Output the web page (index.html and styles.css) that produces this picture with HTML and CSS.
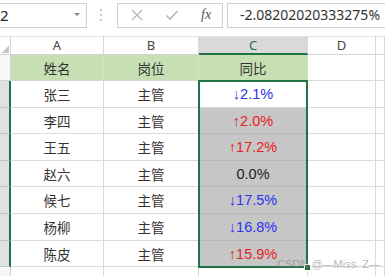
FILE: index.html
```html
<!DOCTYPE html>
<html lang="zh-CN">
  <head>
    <meta charset="UTF-8" />
    <meta name="viewport" content="width=device-width, initial-scale=1.0" />
    <link rel="stylesheet" href="styles.css">
    <title>同比</title>
  </head>
  <body>
    <div class="toolbar">
      <div class="nameBox">
        <span>2</span>
        <svg class="drop" width="6" height="4" viewBox="0 0 6 4"><path d="M0 0h6L3 3z" fill="#888"/></svg>
      </div>
      <svg class="grip" width="4" height="12" viewBox="0 0 4 12">
        <rect x="1" y="0" width="2" height="2" fill="#c8c8c8"/>
        <rect x="1" y="5" width="2" height="2" fill="#c8c8c8"/>
        <rect x="1" y="10" width="2" height="2" fill="#c8c8c8"/>
      </svg>
      <div class="fxBox">
        <svg width="14" height="14" viewBox="0 0 14 14"><path d="M2 2l10 10M12 2L2 12" stroke="#b8b8b8" stroke-width="1.3" fill="none"/></svg>
        <svg width="14" height="14" viewBox="0 0 14 14"><path d="M1.5 7.5l3.5 3.5 7.5-8" stroke="#b8b8b8" stroke-width="1.6" fill="none"/></svg>
        <span class="fx">fx</span>
      </div>
      <div class="formula">-2.08202020333275%</div>
    </div>

    <div class="sheet">
      <div class="corner"></div>
      <div class="colHead">A</div>
      <div class="colHead">B</div>
      <div class="colHead active">C</div>
      <div class="colHead">D</div>
      <div class="colHead"></div>

      <div class="rowHead"></div>
      <div class="cell title">姓名</div>
      <div class="cell title">岗位</div>
      <div class="cell title">同比</div>
      <div class="cell"></div>
      <div class="cell"></div>

      <div class="rowHead sel"></div>
      <div class="cell">张三</div>
      <div class="cell">主管</div>
      <div class="cell num down">↓2.1%</div>
      <div class="cell"></div>
      <div class="cell"></div>

      <div class="rowHead sel"></div>
      <div class="cell">李四</div>
      <div class="cell">主管</div>
      <div class="cell num picked up">↑2.0%</div>
      <div class="cell"></div>
      <div class="cell"></div>

      <div class="rowHead sel"></div>
      <div class="cell">王五</div>
      <div class="cell">主管</div>
      <div class="cell num picked up">↑17.2%</div>
      <div class="cell"></div>
      <div class="cell"></div>

      <div class="rowHead sel"></div>
      <div class="cell">赵六</div>
      <div class="cell">主管</div>
      <div class="cell num picked">0.0%</div>
      <div class="cell"></div>
      <div class="cell"></div>

      <div class="rowHead sel"></div>
      <div class="cell">候七</div>
      <div class="cell">主管</div>
      <div class="cell num picked down">↓17.5%</div>
      <div class="cell"></div>
      <div class="cell"></div>

      <div class="rowHead sel"></div>
      <div class="cell">杨柳</div>
      <div class="cell">主管</div>
      <div class="cell num picked down">↓16.8%</div>
      <div class="cell"></div>
      <div class="cell"></div>

      <div class="rowHead sel"></div>
      <div class="cell">陈皮</div>
      <div class="cell">主管</div>
      <div class="cell num picked up">↑15.9%</div>
      <div class="cell"></div>
      <div class="cell"></div>

      <div class="rowHead"></div>
      <div class="cell"></div>
      <div class="cell"></div>
      <div class="cell"></div>
      <div class="cell"></div>
      <div class="cell"></div>

      <div class="selection"><span class="handle"></span></div>
      <div class="watermark">CSDN @—Miss. Z—</div>
    </div>
  </body>
</html>
```

FILE: styles.css
```css
body {
  margin: 0;
  width: 385px;
  height: 276px;
  overflow: hidden;
  background: #fff;
  font-family: "Noto Sans CJK SC", "Noto Sans", sans-serif;
  color: #333;
}

.toolbar {
  display: flex;
  align-items: center;
  height: 29px;
  padding-top: 1px;
  box-sizing: border-box;
  margin-bottom: 7px;
}

.nameBox {
  display: flex;
  align-items: center;
  justify-content: space-between;
  width: 87px;
  height: 25px;
  box-sizing: border-box;
  border: 1px solid #d0d0d0;
  border-left: none;
  padding: 0 6px 0 0;
  font-family: "Noto Sans", sans-serif;
  font-size: 15px;
  color: #222;
}

.grip {
  margin: 0 0 0 12px;
}

.fxBox {
  display: flex;
  align-items: center;
  width: 106px;
  height: 25px;
  box-sizing: border-box;
  margin-left: 14px;
  border: 1px solid #d0d0d0;
  padding-left: 12px;
  gap: 21px;
}

.fx {
  font-family: "Liberation Serif", serif;
  font-style: italic;
  font-size: 14px;
  color: #555;
  margin-left: 1px;
}

.formula {
  flex: 1;
  height: 25px;
  box-sizing: border-box;
  margin-left: 4px;
  margin-right: -20px;
  border: 1px solid #d0d0d0;
  padding-left: 12px;
  font-family: "Noto Sans", sans-serif;
  font-size: 14px;
  line-height: 22px;
  color: #333;
}

.sheet {
  position: relative;
  display: grid;
  grid-template-columns: 11px 93px 95px 109px 68px 1fr;
  grid-template-rows: 19px 26px 27px 26px 27px 26px 27px 27px 26px 20px;
}

.sheet > div {
  box-sizing: border-box;
}

.corner {
  border-top: 1px solid #e2e2e2;
  border-right: 1px solid #d4d4d4;
  border-bottom: 1px solid #d4d4d4;
  background: linear-gradient(135deg, transparent 55%, #c8c8c8 55%) no-repeat right 1px bottom 1px / 8px 8px;
}

.colHead {
  border-top: 1px solid #e2e2e2;
  border-right: 1px solid #d8d8d8;
  border-bottom: 1px solid #d4d4d4;
  text-align: center;
  font-family: "Noto Sans", sans-serif;
  font-size: 13px;
  line-height: 16px;
  color: #444;
}

.colHead.active {
  background: #d9d9d9;
  border-bottom: 2px solid #217346;
  color: #217346;
}

.rowHead {
  border-right: 1px solid #d4d4d4;
  border-bottom: 1px solid #d4d4d4;
  background: #f7f7f7;
}

.rowHead.sel {
  background: #e1e1e1;
  border-bottom-color: #c4c4c4;
  border-right: 2px solid #217346;
}

.cell {
  display: flex;
  align-items: center;
  justify-content: center;
  border-right: 1px solid #dadada;
  border-bottom: 1px solid #dadada;
  font-size: 13.5px;
  color: #333;
}

.title {
  background: #c6e0b4;
  border-right-color: #cfe2c2;
  border-bottom-color: #d6d6d6;
}

.num {
  font-family: "Liberation Sans", "Noto Sans CJK SC", sans-serif;
  font-size: 14.5px;
}

.picked {
  background: #c6c6c6;
  border-bottom-color: #b6b6b6;
  color: #1a1a1a;
}

.up {
  color: #e62222;
}

.down {
  color: #2a33ee;
}

.selection {
  position: absolute;
  grid-column: 4 / 5;
  grid-row: 3 / 10;
  top: -1px;
  left: -1px;
  right: 0;
  bottom: -1px;
  border: 2px solid #217346;
  pointer-events: none;
}

.handle {
  position: absolute;
  right: -4px;
  bottom: -4px;
  width: 5px;
  height: 5px;
  box-sizing: border-box;
  background: #217346;
  outline: 1px solid #fff;
}

.watermark {
  position: absolute;
  right: 5px;
  bottom: 17px;
  font-family: "Liberation Sans", sans-serif;
  font-size: 11px;
  color: rgba(120, 120, 120, 0.55);
}
```
